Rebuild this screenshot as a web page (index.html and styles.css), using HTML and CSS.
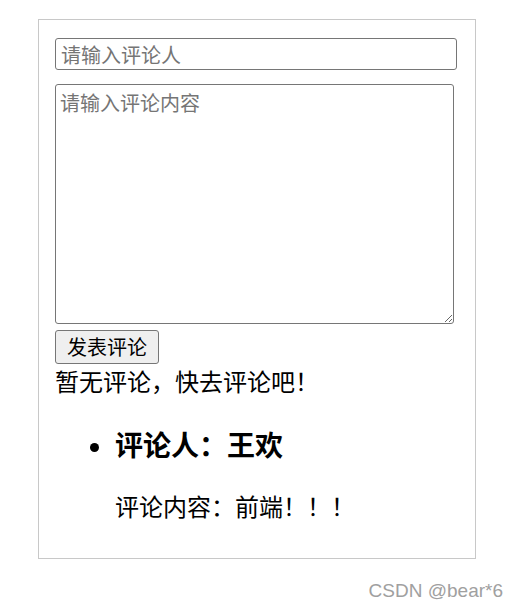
FILE: index.html
```html
<!DOCTYPE html>
<html lang="zh-CN">
<head>
    <meta charset="UTF-8">
    <title>评论</title>
    <link rel="stylesheet" href="styles.css">
</head>
<body>
    <div class="comment-box">
        <input class="name-input" type="text" placeholder="请输入评论人">
        <textarea class="content-input" placeholder="请输入评论内容"></textarea>
        <button class="submit-btn">发表评论</button>
        <p class="empty-tip">暂无评论，快去评论吧！</p>
        <ul class="comment-list">
            <li>
                <h3>评论人：王欢</h3>
                <p>评论内容：前端！！！</p>
            </li>
        </ul>
    </div>
    <div class="watermark">CSDN @bear*6</div>
</body>
</html>
```

FILE: styles.css
```css
body { margin: 0; font-family: "Noto Sans CJK SC", "Liberation Sans", sans-serif; color: #000; background: #fff; }
.comment-box { box-sizing: border-box; width: 438px; margin: 19px 0 0 38px; padding: 18px 16px 35px; border: 1px solid #c8c8c8; }
.name-input, .content-input, .submit-btn { display: block; margin: 0; font-family: "Noto Sans CJK SC", sans-serif; font-size: 20px; box-sizing: border-box; }
.name-input { width: 402px; height: 32px; padding: 0 5px; border: 1px solid #767676; border-radius: 3px; }
.content-input { width: 399px; height: 240px; margin-top: 14px; padding: 3px 4px; border: 1px solid #767676; border-radius: 3px; resize: both; }
.name-input::placeholder, .content-input::placeholder { color: #757575; }
.submit-btn { height: 34px; margin-top: 6px; padding: 0 11px; line-height: 32px; background: #efefef; border: 1px solid #767676; border-radius: 3px; color: #000; }
.empty-tip { margin: 0; font-size: 24px; line-height: 34px; }
.comment-list { margin: 29px 0 0; padding-left: 60px; font-size: 24px; line-height: 34px; }
.comment-list h3 { margin: 0; font-size: 28px; line-height: 34px; }
.comment-list p { margin: 28px 0 0; }
.watermark { position: absolute; right: 16px; top: 581px; font-family: "Liberation Sans", sans-serif; font-size: 19px; line-height: 20px; color: #a0a0a0; }
```
